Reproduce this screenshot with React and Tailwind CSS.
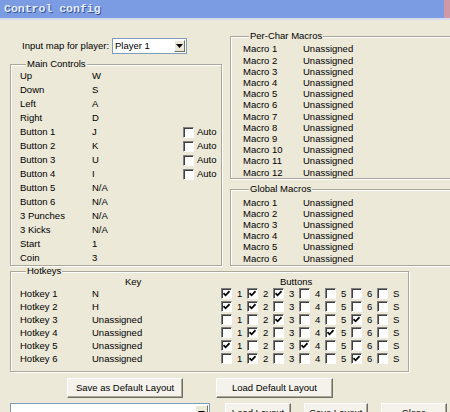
import React from "react";

const mainRows = [
  ["Up", "W"],
  ["Down", "S"],
  ["Left", "A"],
  ["Right", "D"],
  ["Button 1", "J", true],
  ["Button 2", "K", true],
  ["Button 3", "U", true],
  ["Button 4", "I", true],
  ["Button 5", "N/A"],
  ["Button 6", "N/A"],
  ["3 Punches", "N/A"],
  ["3 Kicks", "N/A"],
  ["Start", "1"],
  ["Coin", "3"],
];

const hotkeys = [
  ["Hotkey 1", "N", [1, 1, 1, 0, 0, 0, 0]],
  ["Hotkey 2", "H", [1, 1, 0, 0, 0, 0, 0]],
  ["Hotkey 3", "Unassigned", [0, 0, 1, 0, 0, 1, 0]],
  ["Hotkey 4", "Unassigned", [0, 1, 0, 0, 1, 0, 0]],
  ["Hotkey 5", "Unassigned", [1, 0, 0, 1, 0, 0, 0]],
  ["Hotkey 6", "Unassigned", [0, 1, 0, 0, 0, 1, 0]],
];

const buttonNames = ["1", "2", "3", "4", "5", "6", "S"];

function Check({ on }) {
  return (
    <span className="flex h-[11px] w-[11px] shrink-0 items-center justify-center border border-t-[#808080] border-l-[#808080] border-r-white border-b-white bg-white shadow-[inset_1px_1px_0_#404040]">
      {on ? (
        <svg width="7" height="7" viewBox="0 0 7 7">
          <path d="M0.5 3.2 L2.6 5.3 L6.5 1.2" fill="none" stroke="#000" strokeWidth="1.7" />
        </svg>
      ) : null}
    </span>
  );
}

function Group({ title, className, children }) {
  return (
    <fieldset
      className={`border border-[#aca899] shadow-[inset_1px_1px_0_#fff,1px_1px_0_#fff] ${className}`}
    >
      <legend className="ml-[6px] bg-[#ece9d8] px-px leading-[10px]">{title}</legend>
      {children}
    </fieldset>
  );
}

function Btn({ className, children }) {
  return (
    <div
      className={`flex items-center justify-center border border-t-white border-l-white border-r-[#716f64] border-b-[#716f64] bg-[#f4f2ea] shadow-[inset_-1px_-1px_0_#aca899] ${className}`}
    >
      {children}
    </div>
  );
}

function Arrow() {
  return (
    <svg width="7" height="4" viewBox="0 0 7 4">
      <path d="M0 0 H7 L3.5 4 Z" fill="#000" />
    </svg>
  );
}

export default function App() {
  return (
    <div className="h-[412px] w-[450px] overflow-hidden bg-[#ece9d8] font-['Liberation_Sans',Arial,sans-serif] text-[9.5px] text-black">
      <div className="flex h-[20px] items-center border-b-2 border-[#d6dcea] bg-[#7b9be2]">
        <span className="pl-[4px] font-['Liberation_Mono',monospace] text-[11.5px] font-bold text-[#e6edfc] [text-shadow:1px_1px_0_#34539c]">
          Control config
        </span>
        <span className="ml-auto h-[18px] w-[6px] self-start bg-[#cf9aa6]" />
      </div>

      <div className="w-[470px] pl-[10px]">
        <div className="flex items-start">
          {/* left column */}
          <div className="w-[212px]">
            <div className="mt-[18px] flex h-[16px] items-center">
              <span className="w-[102px] pl-[12px]">Input map for player:</span>
              <div className="flex h-[16px] w-[75px] items-center border border-[#7f9db9] bg-white">
                <span className="pl-[2px]">Player 1</span>
                <span className="ml-auto mr-px flex h-[12px] w-[11px] items-center justify-center border border-t-white border-l-white border-r-[#716f64] border-b-[#716f64] bg-[#ece9d8]">
                  <Arrow />
                </span>
              </div>
            </div>
            <Group title="Main Controls" className="mt-[5px] w-[212px] pl-[9px]">
              {mainRows.map(([label, key, auto]) => (
                <div key={label} className="flex h-[14px] items-center">
                  <span className="w-[72px]">{label}</span>
                  <span className="w-[91px]">{key}</span>
                  {auto ? (
                    <>
                      <Check />
                      <span className="ml-[3px]">Auto</span>
                    </>
                  ) : null}
                </div>
              ))}
            </Group>
          </div>

          {/* right column */}
          <div className="ml-[8px] w-[240px]">
            <Group title="Per-Char Macros" className="mt-[11px] pl-[12px] pt-[3px]">
              {Array.from({ length: 12 }, (_, i) => (
                <div key={i} className="flex h-[11.2px] items-center">
                  <span className="w-[60px]">Macro {i + 1}</span>
                  <span>Unassigned</span>
                </div>
              ))}
            </Group>
            <Group title="Global Macros" className="mt-[5px] pb-px pl-[12px] pt-[3px]">
              {Array.from({ length: 6 }, (_, i) => (
                <div key={i} className="flex h-[11.2px] items-center">
                  <span className="w-[60px]">Macro {i + 1}</span>
                  <span>Unassigned</span>
                </div>
              ))}
            </Group>
          </div>
        </div>

        <Group title="Hotkeys" className="w-[399px] pb-[6px] pl-[9px]">
          <div className="flex h-[11px] items-center">
            <span className="w-[72px]" />
            <span className="w-[129px] pl-[33px]">Key</span>
            <span className="pl-[59px]">Buttons</span>
          </div>
          {hotkeys.map(([label, key, checks]) => (
            <div key={label} className="flex h-[13px] items-center">
              <span className="w-[72px]">{label}</span>
              <span className="w-[129px]">{key}</span>
              {checks.map((c, i) => (
                <span key={i} className="flex w-[26px] items-center">
                  <Check on={c === 1} />
                  <span className="ml-[5px]">{buttonNames[i]}</span>
                </span>
              ))}
            </div>
          ))}
        </Group>

        <div className="mt-[6px] flex">
          <Btn className="ml-[57px] h-[20px] w-[116px]">Save as Default Layout</Btn>
          <Btn className="ml-[33px] h-[20px] w-[117px]">Load Default Layout</Btn>
        </div>

        <div className="mt-[5px] flex">
          <div className="flex h-[20px] w-[200px] items-start border border-[#7f9db9] bg-white">
            <span className="ml-auto mr-px mt-px flex h-[16px] w-[13px] items-center justify-center border border-t-white border-l-white border-r-[#716f64] border-b-[#716f64] bg-[#ece9d8]">
              <Arrow />
            </span>
          </div>
          <Btn className="ml-[15px] h-[20px] w-[66px]">Load Layout</Btn>
          <Btn className="ml-[13px] h-[20px] w-[64px]">Save Layout</Btn>
          <Btn className="ml-[13px] h-[20px] w-[66px]">Close</Btn>
        </div>
      </div>
    </div>
  );
}
